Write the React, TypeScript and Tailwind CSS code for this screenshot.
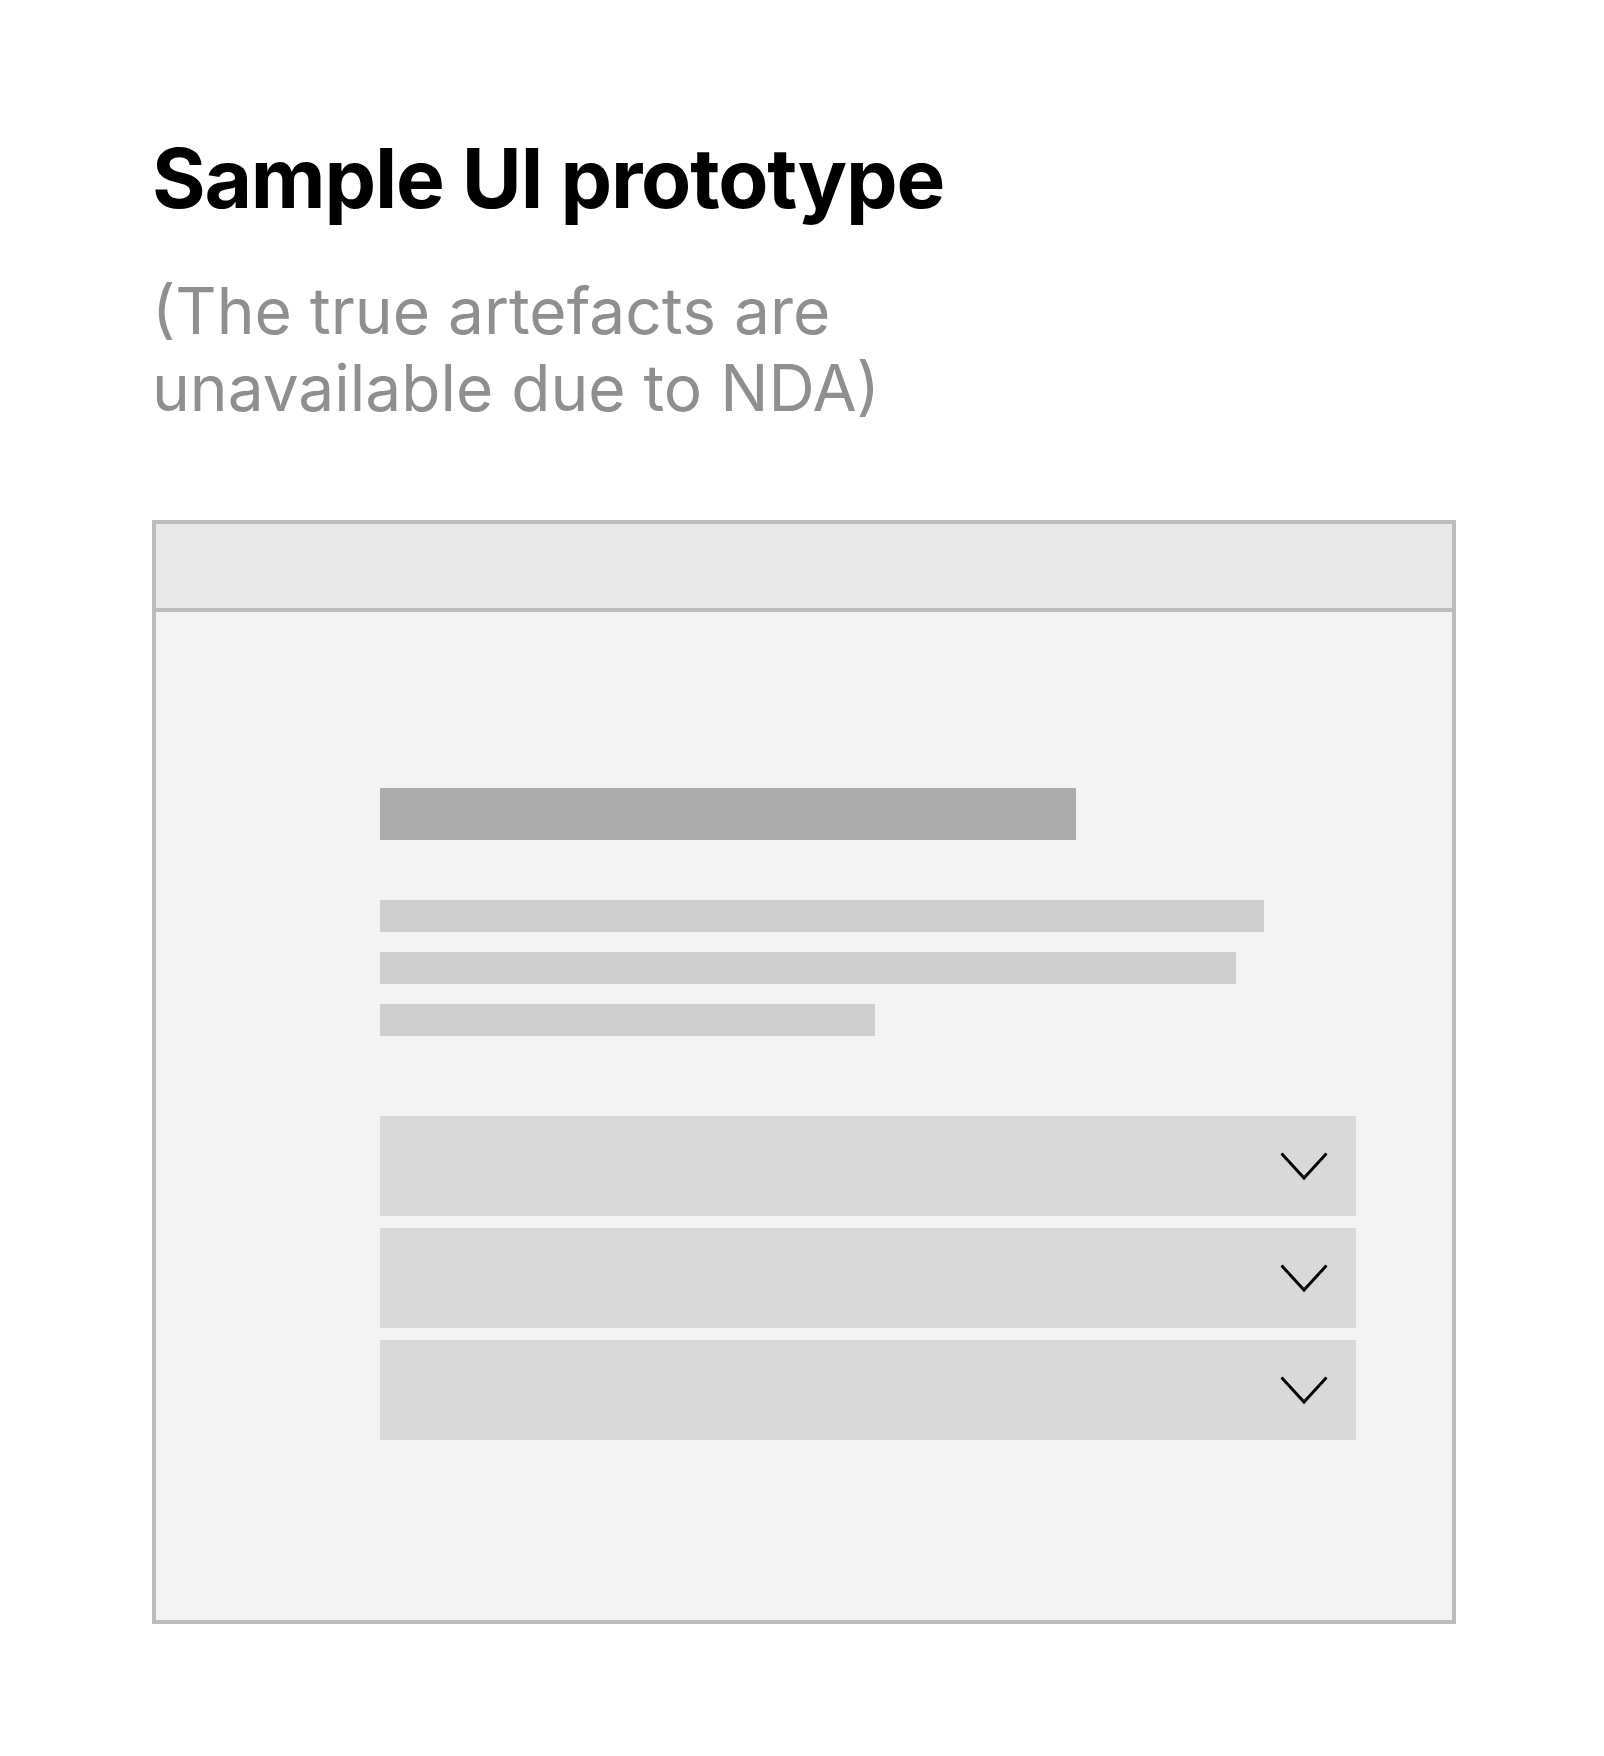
function Accordion() {
  return (
    <div className="flex h-[100px] w-[976px] items-center justify-end bg-[#d9d9d9] pr-[28px]">
      <svg width="48" height="28" viewBox="0 0 48 28" fill="none">
        <path d="M1.5 1.5 L24 26 L46.5 1.5" stroke="#000" strokeWidth="3" />
      </svg>
    </div>
  )
}

export default function App() {
  return (
    <div className="min-h-[1756px] bg-white pl-[152px] pt-[138px]" style={{ fontFamily: 'Inter, "Noto Sans", sans-serif' }}>
      <h1 className="text-[82px] font-bold leading-[82px] tracking-[-0.015em] text-black">Sample UI prototype</h1>
      <p className="mt-[53px] text-[64px] leading-[76.8px] text-[#8f8f8f]">
        (The true artefacts are
        <br />
        unavailable due to NDA)
      </p>
      <div className="mt-[93px] flex h-[1104px] w-[1304px] flex-col border-4 border-[#bcbcbc]">
        <div className="h-[88px] border-b-4 border-[#bcbcbc] bg-[#e8e8e8]" />
        <div className="flex flex-1 flex-col bg-[#f3f3f3] pl-[224px] pt-[176px]">
          <div className="h-[52px] w-[696px] bg-[#acacac]" />
          <div className="mt-[60px] flex flex-col gap-[20px]">
            <div className="h-[32px] w-[884px] bg-[#cecece]" />
            <div className="h-[32px] w-[856px] bg-[#cecece]" />
            <div className="h-[32px] w-[495px] bg-[#cecece]" />
          </div>
          <div className="mt-[80px] flex flex-col gap-[12px]">
            <Accordion />
            <Accordion />
            <Accordion />
          </div>
        </div>
      </div>
    </div>
  )
}
